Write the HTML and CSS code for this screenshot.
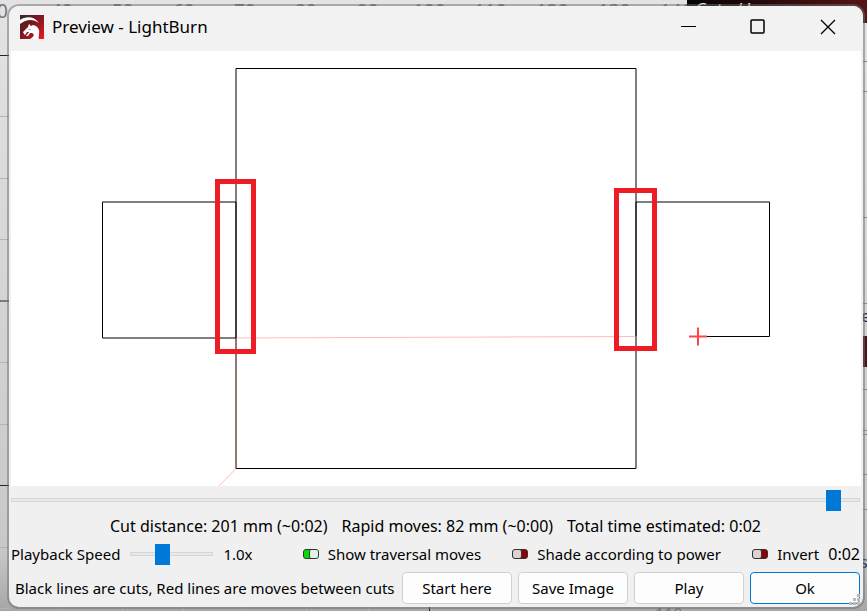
FILE: index.html
```
<!DOCTYPE html>
<html lang="en">
<head>
    <meta charset="UTF-8">
    <meta name="viewport" content="width=device-width, initial-scale=1.0">
    <title>Preview - LightBurn</title>
    <link rel="stylesheet" href="styles.css">
</head>
<body>
    <!-- Main application workspace behind the dialog -->
    <svg class="workspace" aria-hidden="true">
        <defs>
            <linearGradient id="shade" x1="0" y1="0" x2="0" y2="1">
                <stop offset="0" stop-color="#e3e3e3"/>
                <stop offset="0.9" stop-color="#c8c8c8"/>
                <stop offset="1" stop-color="#a6a6a6"/>
            </linearGradient>
            <linearGradient id="banner" x1="0" y1="0" x2="1" y2="0">
                <stop offset="0" stop-color="#050203"/>
                <stop offset="1" stop-color="#561416"/>
            </linearGradient>
        </defs>
        <rect width="100%" height="100%" fill="url(#shade)"/>
        <g class="ruler">
            <text x="-3" y="18">0</text>
            <text x="51" y="18">40</text>
            <text x="112" y="18">50</text>
            <text x="173" y="18">60</text>
            <text x="234" y="18">70</text>
            <text x="295" y="18">80</text>
            <text x="357" y="18">90</text>
            <text x="413" y="18">100</text>
            <text x="474" y="18">110</text>
            <text x="536" y="18">120</text>
            <text x="598" y="18">130</text>
            <text x="660" y="18">140</text>
            <text class="ruler-bottom" x="655" y="620">110</text>
        </g>
        <path d="M0 116.500h9M0 178.500h9M0 239.500h9M0 362.500h9M0 424.500h9M0 547.500h9M0 608.500h9M61.500 600v11M122.500 600v11M183.500 600v11M245.500 600v11M306.500 600v11M368.500 600v11" stroke="#b4b4b4"/>
        <path d="M0 55.500h9M0 301h9M0 485.500h9M429.500 600v11" stroke="#222"/>
        <rect x="687" width="180" height="23" fill="url(#banner)"/>
        <text class="banner-text" x="696" y="15">Cuts / Layers</text>
        <path d="M861 61.500h6M861 91.500h6M861 217.500h6M861 303.500h6M861 389.500h6M861 430.500h6M861 434.500h6M861 474.500h6M861 509.500h6" stroke="#8c8c8c"/>
        <rect x="861" y="336" width="6" height="31" fill="#4b1416"/>
        <text class="panel-text" x="861" y="322">e</text>
        <text class="panel-text" x="860" y="568">s</text>
    </svg>

    <main class="dialog">
        <header class="titlebar">
            <svg class="logo" viewBox="0 0 24 24" aria-hidden="true">
                <defs>
                    <linearGradient id="logo-fill" x1="0" y1="0" x2="1" y2="1">
                        <stop offset="0" stop-color="#352c26"/>
                        <stop offset="0.35" stop-color="#6c1820"/>
                        <stop offset="0.7" stop-color="#a81824"/>
                        <stop offset="1" stop-color="#f81824"/>
                    </linearGradient>
                </defs>
                <rect width="24" height="24" fill="url(#logo-fill)"/>
                <path d="M0 5C6 1 14 1 19 8C13 4 7 4 0 9z" fill="#fff"/>
                <path d="M3 17L8 12L9 9L11 11L13 10C18 11 20 15 19 19C19 21 18 23 19 24H10C14 22 15 19 12 18L10 18L8 21L6 21L9 17L7 17L5 20L4 19z" fill="#fff"/>
                <path d="M8 15l3-1-1 1z" fill="#8c1822"/>
            </svg>
            <h1 class="title">Preview - LightBurn</h1>
            <button class="window-button" type="button" aria-label="Minimize">
                <svg viewBox="0 0 16 16"><path d="M1 7.500H16"/></svg>
            </button>
            <button class="window-button" type="button" aria-label="Maximize">
                <svg viewBox="0 0 16 16"><rect x="1" y="1" width="13" height="13" rx="1" stroke-width="1.500"/></svg>
            </button>
            <button class="window-button" type="button" aria-label="Close">
                <svg viewBox="0 0 16 16"><path d="M1 1L15 15M15 1L1 15" stroke-width="1.300"/></svg>
            </button>
        </header>

        <section class="preview">
            <svg class="drawing" viewBox="0 0 850 435" role="img" aria-label="Cut path preview">
                <g fill="none">
                    <path class="cut" d="M225 17.500H625V417.500H225z"/>
                    <path class="cut" d="M225 151H91.500V287H225z"/>
                    <path class="cut" d="M625 285V151H758.500V285.500H687"/>
                    <path class="travel" d="M208 435L225 417.500V287L625 285.500"/>
                    <path class="cursor" d="M678 285.500H696M687 276.500V294.500"/>
                    <rect class="marker" x="206.500" y="130.500" width="36" height="170"/>
                    <rect class="marker" x="605.500" y="139.500" width="38" height="158"/>
                </g>
            </svg>
        </section>

        <section class="controls">
            <input class="slider" type="range" min="0" max="1000" value="978" aria-label="Playback position">

            <p class="stats">
                <span>Cut distance: 201 mm (~0:02)</span>
                <span>Rapid moves: 82 mm (~0:00)</span>
                <span>Total time estimated: 0:02</span>
            </p>

            <div class="options">
                <div class="speed">
                    <label for="speed">Playback Speed</label>
                    <input class="slider slider-small" id="speed" type="range" min="0" max="100" value="36">
                    <output for="speed">1.0x</output>
                </div>
                <label class="toggle"><input type="checkbox" checked>Show traversal moves</label>
                <label class="toggle"><input type="checkbox">Shade according to power</label>
                <div class="invert">
                    <label class="toggle"><input type="checkbox">Invert</label>
                    <span class="time">0:02</span>
                </div>
            </div>

            <div class="actions">
                <p class="legend">Black lines are cuts, Red lines are moves between cuts</p>
                <button class="button" type="button">Start here</button>
                <button class="button" type="button">Save Image</button>
                <button class="button" type="button">Play</button>
                <button class="button button-default" type="button">Ok</button>
            </div>
        </section>

        <svg class="grip" viewBox="0 0 11 11" aria-hidden="true">
            <path d="M8 0h3v3h-3zM4 4h3v3h-3zM8 4h3v3h-3zM0 8h3v3h-3zM4 8h3v3h-3zM8 8h3v3h-3z" fill="#bababa"/>
        </svg>
    </main>
</body>
</html>
```
FILE: styles.css
```
* {
    box-sizing: border-box;
}
body {
    margin: 0;
    padding: 6px 4px 4px 9px;
    height: 100vh;
    overflow: hidden;
    font-family: "Noto Sans", "Open Sans", sans-serif;
    font-size: 15px;
    line-height: 20px;
    color: #000;
}
h1, p {
    margin: 0;
    font-weight: normal;
}
button, input {
    font: inherit;
    color: inherit;
}

/* workspace behind the dialog */
.workspace {
    position: absolute;
    inset: 0;
    width: 100%;
    height: 100%;
    z-index: -1;
}
.ruler {
    font-size: 19px;
    fill: #77747c;
}
.ruler-bottom {
    font-size: 16px;
}
.banner-text {
    font-size: 17px;
    fill: #e8e8e8;
}
.panel-text {
    font-size: 16px;
    fill: #28344c;
}

/* dialog */
.dialog {
    position: relative;
    display: flex;
    flex-direction: column;
    height: 100%;
    background-color: #f0f0f0;
    border-radius: 10px;
    box-shadow: 0 0 0 2px rgba(110, 110, 110, 0.5);
    overflow: hidden;
}
.titlebar {
    display: flex;
    align-items: center;
    height: 45px;
    padding: 0 0 4px 11px;
    background-color: #f2f2f2;
}
.logo {
    width: 24px;
    height: 24px;
}
.title {
    flex: 1;
    margin-left: 8px;
    font-size: 17px;
    line-height: 24px;
}
.window-button {
    display: flex;
    align-items: center;
    justify-content: center;
    width: 70px;
    height: 40px;
    padding: 0;
    border: 0;
    background: none;
}
.window-button svg {
    width: 16px;
    height: 16px;
    fill: none;
    stroke: #000;
}

.preview {
    flex: 1;
    min-height: 0;
    margin: 0 2px;
    background-color: #fff;
}
.drawing {
    display: block;
    width: 100%;
    height: 100%;
}
.cut {
    stroke: #000;
}
.travel {
    stroke: #ff4040;
    stroke-opacity: 0.35;
}
.cursor {
    stroke: #ff4646;
    stroke-width: 2;
}
.marker {
    stroke: #ee1c24;
    stroke-width: 5;
}

/* controls */
.controls {
    padding: 4px 3px 3px 2px;
}
.slider {
    appearance: none;
    display: block;
    width: 100%;
    height: 20px;
    margin: 0;
    background: none;
}
.slider::-webkit-slider-runnable-track {
    height: 4px;
    background-color: #e7eaea;
    border: 1px solid #d3d7d7;
}
.slider::-webkit-slider-thumb {
    appearance: none;
    width: 15px;
    height: 21px;
    margin-top: -9px;
    background-color: #0078d7;
}
.slider-small {
    width: 83px;
}
.stats {
    display: flex;
    justify-content: center;
    gap: 14px;
    margin-top: 6px;
    font-size: 16px;
}
.options {
    display: flex;
    align-items: center;
    justify-content: space-between;
    margin-top: 6px;
    height: 24px;
}
.speed {
    display: flex;
    align-items: center;
    gap: 10px;
    margin-right: 19px;
}
.invert {
    display: flex;
    gap: 9px;
}
.time {
    font-size: 16px;
}
.toggle {
    display: flex;
    align-items: center;
    gap: 9px;
}
.toggle input {
    appearance: none;
    display: flex;
    width: 16px;
    height: 10px;
    margin: 0;
    border: 1px solid #333;
    border-radius: 3px;
    background-color: #900000;
}
.toggle input::before {
    content: "";
    width: 8px;
    border-right: 1px solid #333;
    border-radius: 2px;
    background-color: #dcd2d2;
}
.toggle input:checked {
    justify-content: flex-end;
    background-color: #00e000;
}
.toggle input:checked::before {
    border-right: 0;
    border-left: 1px solid #333;
    background-color: #e6f0e8;
}
.actions {
    display: flex;
    align-items: center;
    gap: 6px;
    margin-top: 6px;
}
.legend {
    flex: 1;
    padding-left: 4px;
    white-space: nowrap;
}
.button {
    flex: 0 0 110px;
    height: 32px;
    padding: 0;
    background-color: #fdfdfd;
    border: 1px solid #d0d0d0;
    border-radius: 4px;
}
.button-default {
    border-color: #0078d4;
}
.grip {
    position: absolute;
    right: 3px;
    bottom: 2px;
    width: 11px;
    height: 11px;
}
```
